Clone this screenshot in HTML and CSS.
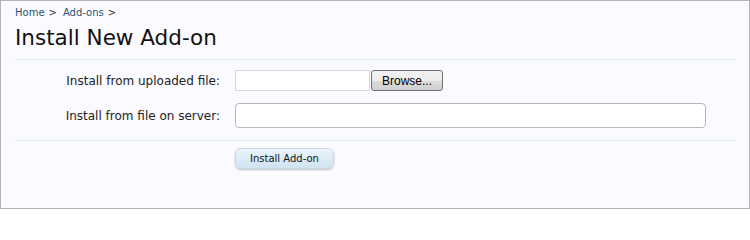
FILE: index.html
```html
<!DOCTYPE html>
<html>
<head>
<meta charset="utf-8">
<link rel="stylesheet" href="styles.css">
</head>
<body>
<div class="page">
  <div class="crumbs">
    <a class="crumb" href="#">Home</a><span class="arrow">&gt;</span>
    <a class="crumb" href="#">Add-ons</a><span class="arrow">&gt;</span>
  </div>
  <h1 class="title">Install New Add-on</h1>
  <form class="form">
    <div class="rows">
      <div class="row">
        <label class="label">Install from uploaded file:</label>
        <div class="ctrl">
          <span class="fileBox"></span><button type="button" class="browse">Browse...</button>
        </div>
      </div>
      <div class="row">
        <label class="label">Install from file on server:</label>
        <div class="ctrl"><input class="text" type="text"></div>
      </div>
    </div>
    <div class="submitRow">
      <button type="button" class="primary">Install Add-on</button>
    </div>
  </form>
</div>
</body>
</html>
```
FILE: styles.css
```css
html, body { margin: 0; padding: 0; }
body { width: 750px; height: 210px; font-family: "DejaVu Sans", Verdana, sans-serif; }
.page {
  box-sizing: border-box;
  width: 750px; height: 209px;
  border: 1px solid #b4b4b4;
  background: #fbfbff;
  padding: 5px 14px 0 14px;
}
.crumbs { font-size: 10px; height: 14px; line-height: 14px; display: flex; }
.crumb { color: #2b5276; text-decoration: none; }
.arrow { color: #333; margin: 0 6px 0 4px; }
.title {
  margin: 3px 0 0 0; font-size: 21.5px; font-weight: normal; color: #111;
  line-height: 30px; padding-bottom: 6px;
  border-bottom: 1px solid #dcebee;
}
.form { margin: 0; }
.rows { padding: 10px 0 12px 0; display: flex; flex-direction: column; gap: 12px; border-bottom: 1px solid #dcebee; }
.row { display: flex; align-items: center; }
.label { width: 205px; text-align: right; font-size: 12px; color: #222; padding-right: 15px; }
.ctrl { display: flex; align-items: center; }
.fileBox {
  display: block; width: 135px; height: 21px; box-sizing: border-box;
  border: 1px solid #d6d6d6; background: #fff;
}
.browse {
  box-sizing: border-box; width: 72px; height: 21px; margin-left: 1px;
  border: 1px solid #707070; border-radius: 3px;
  background: linear-gradient(#f2f2f2, #ebebeb 50%, #dddddd 51%, #cfcfcf);
  font-family: "Liberation Sans", Arial, sans-serif; font-size: 12px; color: #000; padding: 0;
}
.text {
  box-sizing: border-box; width: 471px; height: 25px; margin: 0;
  border: 1px solid #b8b8b8; border-radius: 4px; background: #fff; padding: 0 4px;
}
.submitRow { padding: 6px 0 0 220px; }
.primary {
  box-sizing: border-box; width: 99px; height: 21px; padding: 0;
  border: 1px solid #c8d8e4; border-radius: 6px;
  background: linear-gradient(#eaf4fa, #cfe3f0);
  box-shadow: 0 1px 2px rgba(0,0,0,0.25);
  font-family: "DejaVu Sans", Verdana, sans-serif; font-size: 10px; color: #111;
}
```
